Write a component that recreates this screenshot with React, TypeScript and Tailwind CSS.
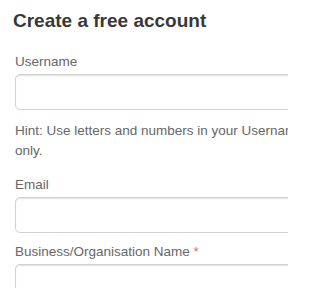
import React from "react";

function Field({ label, required }: { label: string; required?: boolean }) {
  return (
    <div>
      <div className="text-[13.5px] leading-[18px] text-[#676767] mb-[3px] whitespace-nowrap">
        {label}
        {required && <span className="text-[#e36a6a]"> *</span>}
      </div>
      <div className="h-[36px] w-[320px] rounded-[5px] border border-[#d0d0d0] bg-white shadow-[inset_0_1px_1px_rgba(0,0,0,0.12)]" />
    </div>
  );
}

export default function App() {
  return (
    <div
      className="w-[288px] h-[288px] overflow-hidden bg-white pl-[15px] pt-[10px]"
      style={{ fontFamily: '"Liberation Sans", Arial, sans-serif' }}
    >
      <h1 className="ml-[-2px] text-[19px] leading-[22px] font-bold text-[#383838] whitespace-nowrap">
        Create a free account
      </h1>
      <div className="mt-[21px]">
        <Field label="Username" />
      </div>
      <p className="mt-[11px] w-[300px] text-[13.5px] leading-[20px] text-[#676767]">
        Hint: Use letters and numbers in your Username only.
      </p>
      <div className="mt-[15px]">
        <Field label="Email" />
      </div>
      <div className="mt-[10px]">
        <Field label="Business/Organisation Name" required />
      </div>
    </div>
  );
}
